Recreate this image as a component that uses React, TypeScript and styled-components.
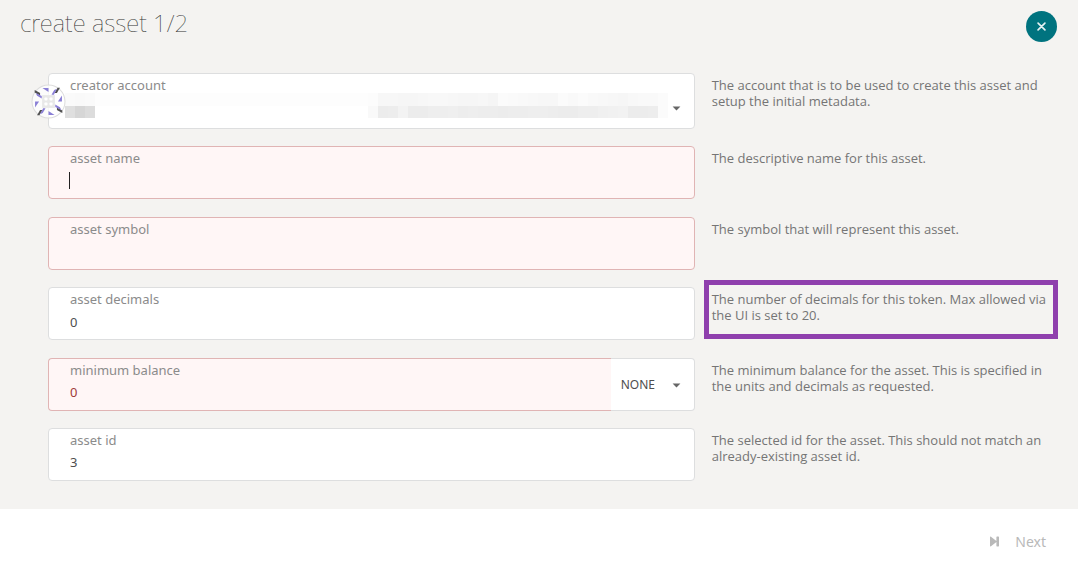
import React from "react";
import styled, { createGlobalStyle, css } from "styled-components";

const colors = {
  page: "#f4f3f1",
  text: "#4e4e4e",
  label: "#8b8b8b",
  help: "#757575",
  border: "#dddedf",
  error: "#e0b4b4",
  errorBg: "#fff6f6",
  errorText: "#9f3a38",
  accent: "#00737f",
  highlight: "#8f3fad",
};

const GlobalStyle = createGlobalStyle`
  *, *::before, *::after { box-sizing: border-box; }
  body {
    margin: 0;
    background: #fff;
    color: ${colors.text};
    font-family: "Noto Sans", sans-serif;
    font-size: 13px;
  }
  input, select, button { font: inherit; color: inherit; }
`;

const Content = styled.section`
  background: ${colors.page};
  padding: 11px 20px 28px;
`;

const Header = styled.header`
  display: flex;
  justify-content: space-between;
  align-items: flex-start;
  height: 62px;
`;

const Title = styled.h1`
  margin: 0;
  color: #333;
  font-size: 24px;
  font-weight: 100;
  line-height: 24px;
`;

const CloseButton = styled.button`
  display: flex;
  align-items: center;
  justify-content: center;
  width: 31px;
  height: 31px;
  margin-right: 1px;
  padding: 0;
  border: 0;
  border-radius: 50%;
  background: ${colors.accent};
  cursor: pointer;
`;

const Form = styled.form`
  display: flex;
  flex-direction: column;
  justify-content: space-between;
  min-height: 408px;
`;

const Row = styled.div`
  display: grid;
  grid-template-columns: minmax(0, 65fr) minmax(0, 35fr);
`;

const Control = styled.div`
  position: relative;
  display: flex;
  margin-left: 28px;
`;

const Field = styled.div<{ $error?: boolean; $tall?: boolean; $joined?: boolean }>`
  position: relative;
  flex: 1;
  min-width: 0;
  min-height: ${p => (p.$tall ? 56 : 53)}px;
  padding: 2px 0 4px;
  border: 1px solid ${colors.border};
  border-radius: 4px;
  background: #fff;
  ${p => p.$error && css`
    border-color: ${colors.error};
    background: ${colors.errorBg};
    color: ${colors.errorText};
  `}
  ${p => p.$joined && css`
    border-right: 0;
    border-radius: 4px 0 0 4px;
  `}
`;

const Label = styled.label`
  display: block;
  padding: 0 21px;
  line-height: 18px;
  color: ${colors.label};
`;

const TextInput = styled.input`
  display: block;
  width: 100%;
  height: 27px;
  padding: 0 21px;
  border: 0;
  outline: 0;
  background: transparent;
  caret-color: transparent;
`;

const Caret = styled.span`
  position: absolute;
  left: 20px;
  top: 25px;
  width: 1px;
  height: 17px;
  background: #222;
`;

const AccountSelect = styled.select`
  display: block;
  width: 100%;
  height: 27px;
  padding: 0 21px;
  border: 0;
  outline: 0;
  appearance: none;
  background: transparent;
`;

const UnitBox = styled.div`
  position: relative;
  width: 84px;
  border: 1px solid ${colors.border};
  border-left: 0;
  border-radius: 0 4px 4px 0;
  background: #fff;
`;

const UnitSelect = styled.select`
  width: 100%;
  height: 100%;
  padding: 0 10px;
  border: 0;
  outline: 0;
  appearance: none;
  background: transparent;
  font-size: 12px;
`;

const Arrow = styled.svg<{ $top: number }>`
  position: absolute;
  right: 13px;
  top: ${p => p.$top}px;
  width: 9px;
  height: 5px;
  pointer-events: none;
`;

const Avatar = styled.svg`
  position: absolute;
  left: -17px;
  top: 11px;
  width: 35px;
  height: 35px;
`;

const Mosaic = styled.div`
  position: absolute;
  left: 16px;
  right: 26px;
  top: 19px;
  pointer-events: none;
`;

const MosaicLine = styled.div<{ $fill: string; $height: number }>`
  display: flex;
  justify-content: space-between;
  height: ${p => p.$height}px;
  background: ${p => p.$fill};
`;

const Cells = styled.div`
  display: flex;
`;

const Cell = styled.span<{ $shade: number }>`
  width: 10px;
  background: rgb(${p => p.$shade}, ${p => p.$shade}, ${p => p.$shade});
`;

const Help = styled.div<{ $highlight?: boolean }>`
  position: relative;
  padding: 4px 0 0 17px;
  font-family: "Open Sans", sans-serif;
  line-height: 16px;
  color: ${colors.help};
  ${p => p.$highlight && css`
    &::after {
      content: "";
      position: absolute;
      top: -7px;
      right: 0;
      bottom: 1px;
      left: 9px;
      border: 5px solid ${colors.highlight};
    }
  `}
`;

const Footer = styled.footer`
  display: flex;
  justify-content: flex-end;
  padding: 19px 32px 0;
`;

const NextButton = styled.button`
  display: flex;
  align-items: center;
  gap: 15px;
  height: 26px;
  padding: 0;
  border: 0;
  background: none;
  color: #b9b9b9;
  font-size: 14px;
`;

const leftTop = [250, 249, 250];
const leftBottom = [223, 214, 220];
const rightTop = [252, 247, 247, 246, 246, 247, 248, 248, 247, 246, 246, 247, 245, 251, 250, 249, 248, 247, 247, 251, 249, 251, 249, 248, 247, 246, 248, 249, 249, 251];
const rightBottom = [249, 236, 237, 243, 236, 236, 238, 238, 239, 237, 238, 237, 237, 236, 237, 237, 238, 238, 237, 236, 236, 238, 238, 240, 241, 242, 236, 236, 237, 251];

function CellRun({ shades }: { shades: number[] }) {
  return <Cells>{shades.map((shade, i) => <Cell key={i} $shade={shade} />)}</Cells>;
}

function DropArrow({ top }: { top: number }) {
  return (
    <Arrow $top={top} viewBox="0 0 9 5" aria-hidden="true">
      <path d="M0.6 0.5h7.8L4.5 4.6z" fill="#666" />
    </Arrow>
  );
}

function Identicon() {
  return (
    <Avatar viewBox="-52 -52 104 104" aria-hidden="true">
      <circle r="49" fill="#fff" fillOpacity="0.75" stroke="#dcdcdc" strokeWidth="3" />
      {[0, 90, 180, 270].map(angle => (
        <g key={angle} transform={`rotate(${angle})`}>
          <path d="M-41-34L-25-25V-18L-41-27z" fill="#505050" />
          <path d="M-38-25L-20-16V-9L-34-17z" fill="#8a7fd6" />
          <path d="M-40 18V0H-28z" fill="#8a7fd6" />
        </g>
      ))}
      <rect x="-19" y="-19" width="38" height="38" fill="#e8e8e8" />
      {[-12, 3].map(x => [-12, 3].map(y => (
        <rect key={`${x}${y}`} x={x} y={y} width="9" height="9" rx="2" fill="#fff" />
      )))}
    </Avatar>
  );
}

interface TextFieldProps {
  id: string;
  label: string;
  value?: string;
  error?: boolean;
  joined?: boolean;
  caret?: boolean;
}

function TextField({ id, label, value = "", error, joined, caret }: TextFieldProps) {
  return (
    <Field $error={error} $joined={joined}>
      <Label htmlFor={id}>{label}</Label>
      <TextInput id={id} type="text" defaultValue={value} />
      {caret && <Caret />}
    </Field>
  );
}

export default function App() {
  return (
    <main>
      <GlobalStyle />
      <Content>
        <Header>
          <Title>create asset 1/2</Title>
          <CloseButton type="button" aria-label="Close">
            <svg width="9" height="9" viewBox="0 0 10 10" aria-hidden="true">
              <path d="M1.2 1.2L8.8 8.8M8.8 1.2L1.2 8.8" stroke="#e6f1f2" strokeWidth="1.8" strokeLinecap="round" />
            </svg>
          </CloseButton>
        </Header>
        <Form>
          <Row>
            <Control>
              <Field $tall>
                <Label htmlFor="creator">creator account</Label>
                <AccountSelect id="creator" />
                <Mosaic aria-hidden="true">
                  <MosaicLine $fill="#fdfdfd" $height={13}>
                    <CellRun shades={leftTop} />
                    <CellRun shades={rightTop} />
                  </MosaicLine>
                  <MosaicLine $fill="#fff" $height={12}>
                    <CellRun shades={leftBottom} />
                    <CellRun shades={rightBottom} />
                  </MosaicLine>
                </Mosaic>
                <DropArrow top={32} />
              </Field>
              <Identicon />
            </Control>
            <Help>The account that is to be used to create this asset and setup the initial metadata.</Help>
          </Row>
          <Row>
            <Control><TextField id="name" label="asset name" error caret /></Control>
            <Help>The descriptive name for this asset.</Help>
          </Row>
          <Row>
            <Control><TextField id="symbol" label="asset symbol" error /></Control>
            <Help>The symbol that will represent this asset.</Help>
          </Row>
          <Row>
            <Control><TextField id="decimals" label="asset decimals" value="0" /></Control>
            <Help $highlight>The number of decimals for this token. Max allowed via the UI is set to 20.</Help>
          </Row>
          <Row>
            <Control>
              <TextField id="balance" label="minimum balance" value="0" error joined />
              <UnitBox>
                <UnitSelect aria-label="unit">
                  <option>NONE</option>
                </UnitSelect>
                <DropArrow top={24} />
              </UnitBox>
            </Control>
            <Help>The minimum balance for the asset. This is specified in the units and decimals as requested.</Help>
          </Row>
          <Row>
            <Control><TextField id="asset-id" label="asset id" value="3" /></Control>
            <Help>The selected id for the asset. This should not match an already-existing asset id.</Help>
          </Row>
        </Form>
      </Content>
      <Footer>
        <NextButton type="button" disabled>
          <svg width="11" height="11" viewBox="0 0 11 11" aria-hidden="true">
            <path d="M1 1.2C1 0.6 1.6 0.4 2 0.8L7.4 5V1.2Q7.4 0.6 8 0.6H9.4Q10 0.6 10 1.2V9.8Q10 10.4 9.4 10.4H8Q7.4 10.4 7.4 9.8V6L2 10.2C1.6 10.6 1 10.4 1 9.8z" fill="#b9b9b9" />
          </svg>
          Next
        </NextButton>
      </Footer>
    </main>
  );
}
